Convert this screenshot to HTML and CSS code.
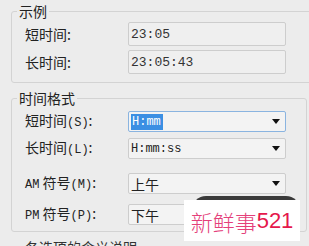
FILE: index.html
```html
<!DOCTYPE html>
<html lang="zh">
<head>
<meta charset="utf-8">
<link rel="stylesheet" href="styles.css">
</head>
<body>
<fieldset class="group group-sample">
  <legend>示例</legend>
  <div class="rows rows-sample">
    <div class="row"><span class="label">短时间:</span><div class="field text"><span class="mono13">23:05</span></div></div>
    <div class="row"><span class="label">长时间:</span><div class="field text"><span class="mono13">23:05:43</span></div></div>
  </div>
</fieldset>
<fieldset class="group group-format">
  <legend>时间格式</legend>
  <div class="rows rows-format">
    <div class="row r1"><span class="label">短时间<span class="ascii">(S)</span>:</span><div class="field drop focus"><span class="mono12 sel">H:mm</span><i class="arrow"></i></div></div>
    <div class="row r2"><span class="label">长时间<span class="ascii">(L)</span>:</span><div class="field drop"><span class="mono12">H:mm:ss</span><i class="arrow"></i></div></div>
    <div class="row r3"><span class="label"><span class="ascii">AM</span> 符号<span class="ascii">(M)</span>:</span><div class="field drop"><span class="cjk">上午</span><i class="arrow"></i></div></div>
    <div class="row r4"><span class="label"><span class="ascii">PM</span> 符号<span class="ascii">(P)</span>:</span><div class="field drop"><span class="cjk">下午</span></div></div>
  </div>
</fieldset>
<div class="tail">各选项的含义说明</div>

<div class="toast"></div>
<div class="mark"><span class="mark-cn">新鲜事</span><span class="mark-num">521</span></div>
</body>
</html>
```

FILE: styles.css
```css
html, body {
  margin: 0;
  padding: 0;
}
body {
  width: 309px;
  height: 246px;
  overflow: hidden;
  position: relative;
  background: #ececec;
  font-family: "Noto Sans CJK SC", "Noto Sans", sans-serif;
  font-size: 13px;
  color: #222;
}
.group {
  margin: 3px 2px 0 11px;
  padding: 0 0 0 13px;
  border: 1px solid #d3d3d3;
  border-radius: 3px;
  min-width: 0;
}
.group-sample {
  margin-right: -12px;
}
.group-format {
  margin-top: 7px;
}
legend {
  font-size: 14px;
  line-height: 16px;
  padding: 0 2px;
  margin-left: -8px;
  color: #222;
}
.rows {
  display: flex;
  flex-direction: column;
}
.rows-sample {
  padding: 3px 0 8px;
  gap: 4px;
}
.rows-format {
  padding: 5px 0 6px;
}
.r2 { margin-top: 6px; }
.r3 { margin-top: 14px; }
.r4 { margin-top: 10px; }
.row {
  display: flex;
  align-items: center;
}
.label {
  width: 103px;
  flex: none;
  font-size: 14px;
  line-height: 16px;
  white-space: nowrap;
}
.ascii {
  font-family: "Liberation Mono", monospace;
  font-size: 12px;
}
.field {
  width: 158px;
  flex: none;
  box-sizing: border-box;
  border: 1px solid #cdcdcd;
  border-radius: 2px;
  display: flex;
  align-items: center;
  padding-left: 2px;
}
.text {
  height: 24px;
  background: #efefef;
}
.drop {
  height: 21px;
  background: #f3f3f3;
}
.focus {
  border-color: #8ab4e0;
}
.mono13 {
  font-family: "Liberation Mono", monospace;
  font-size: 13px;
  color: #333;
}
.mono12 {
  font-family: "Liberation Mono", monospace;
  font-size: 12px;
  color: #222;
}
.sel {
  background: #3b8fe3;
  color: #fff;
  padding: 0 2px 0 1px;
  line-height: 16px;
}
.cjk {
  font-size: 14px;
  line-height: 16px;
}
.arrow {
  margin-left: auto;
  margin-right: 5px;
  width: 0;
  height: 0;
  border-left: 4px solid transparent;
  border-right: 4px solid transparent;
  border-top: 5px solid #111;
}
.tail {
  margin: 7px 0 0 25px;
  font-size: 14px;
  line-height: 16px;
  color: #333;
}
.toast {
  position: absolute;
  left: 192px;
  top: 196px;
  width: 108px;
  height: 30px;
  border-radius: 14px;
  background: #3a3a3a;
}
.mark {
  position: absolute;
  left: 184px;
  top: 200px;
  width: 116px;
  height: 41px;
  background: #fff;
  display: flex;
  align-items: center;
  justify-content: center;
  font-size: 22px;
  line-height: 24px;
}
.mark-cn {
  font-family: "Noto Sans CJK SC", sans-serif;
  font-weight: 300;
  color: #e4407a;
}
.mark-num {
  font-family: "Liberation Sans", sans-serif;
  color: #e5184c;
}
```
